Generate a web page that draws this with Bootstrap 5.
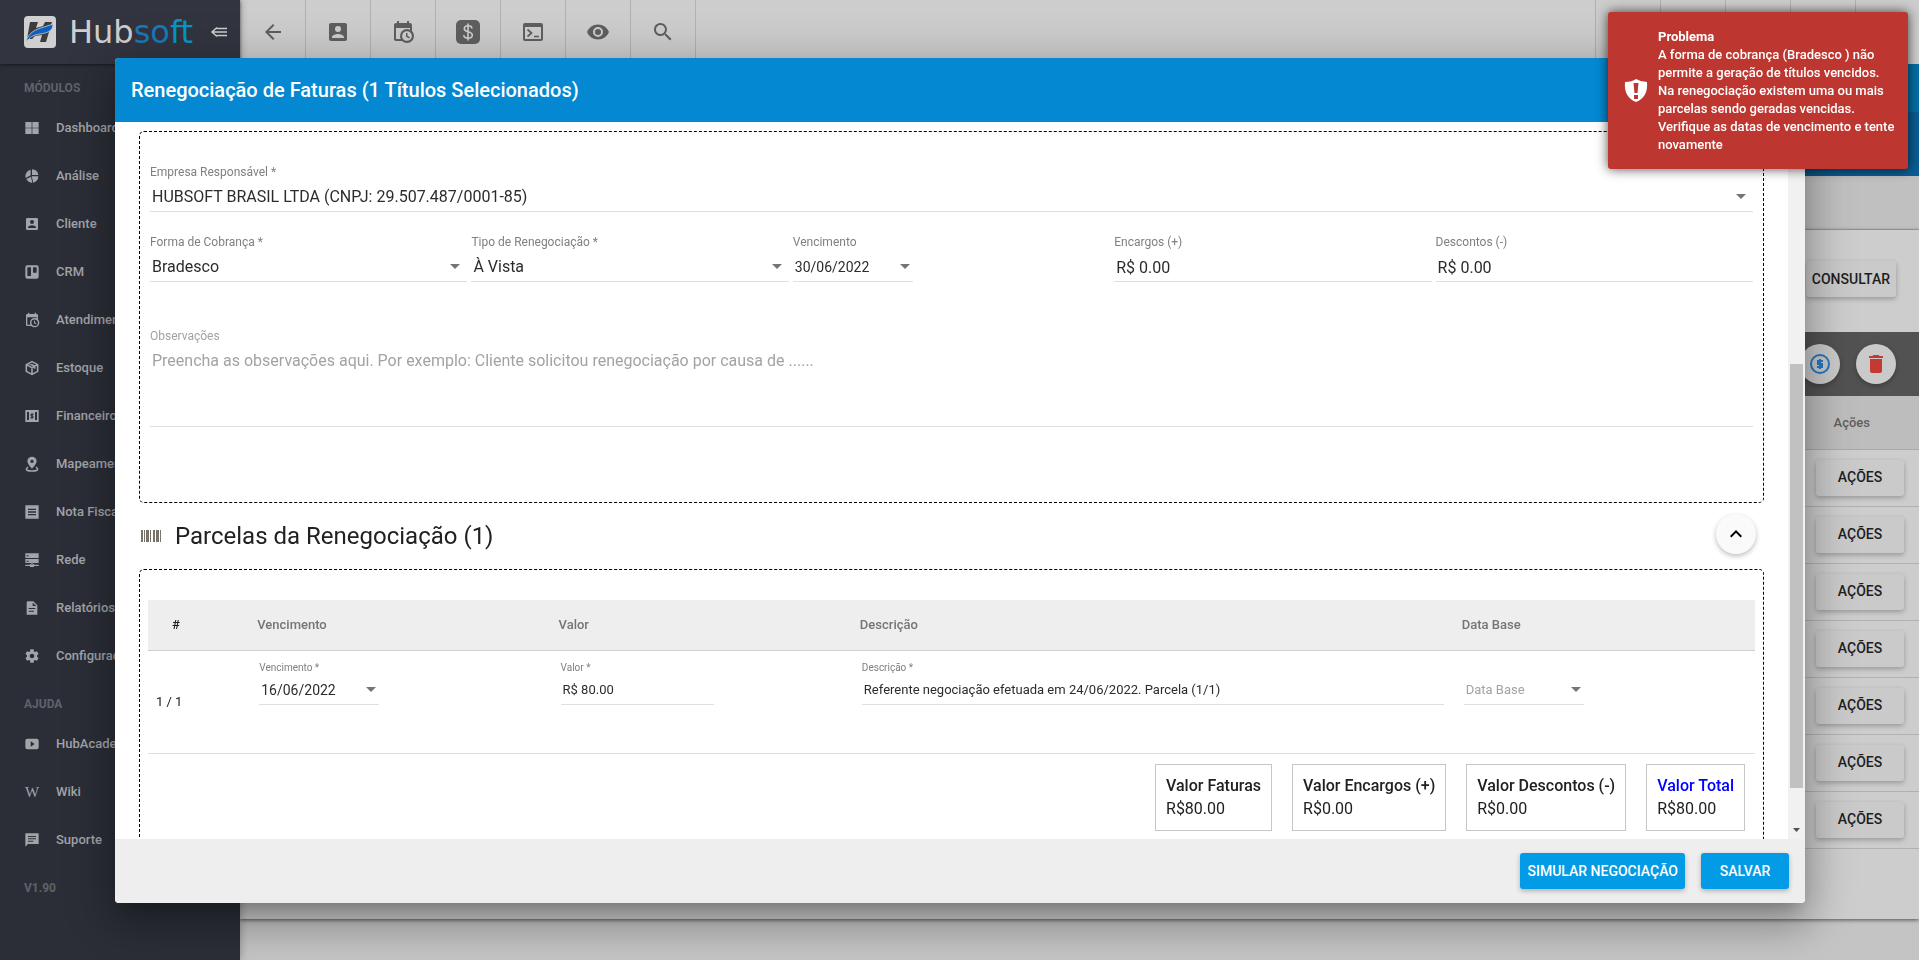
<!DOCTYPE html>
<html lang="pt-BR">
<head>
<meta charset="utf-8">
<meta name="viewport" content="width=device-width, initial-scale=1">
<title>Hubsoft - Renegociação de Faturas</title>
<link href="https://cdn.jsdelivr.net/npm/bootstrap@5.3.0/dist/css/bootstrap.min.css" rel="stylesheet">
<style>
body{font-family:Roboto,"Liberation Sans",sans-serif;font-size:14px;color:#212121;background:#c4c4c4;height:100vh;overflow:hidden}
svg{fill:currentColor;flex:none}
.line{fill:none}
/* sidebar */
.side{width:240px;background:#2b2e37;color:#a2a4a8;z-index:2;box-shadow:0 0 8px rgba(0,0,0,.3)}
.side-top{height:64px;padding:0 12px 0 24px;background:#32343f;box-shadow:0 1px 3px rgba(0,0,0,.5)}
.brand-name{font-family:"DejaVu Sans","Liberation Sans",sans-serif;font-weight:400;font-size:32px;line-height:32px;color:#cfcfcf;margin-left:13px}
.brand-name b{font-weight:400;color:#1a79b8}
.brand-name b+b{color:#0d93c8}
.side-title{height:40px;padding:15px 0 0 24px;font-size:12px;line-height:18px;font-weight:700;color:#5f6269}
.side .nav-link{height:48px;padding:0 24px;gap:16px;font-size:13px;font-weight:500;color:inherit;white-space:nowrap}
.wiki{width:16px;font-family:"Liberation Serif",serif;font-size:15px;line-height:16px;text-align:center}
/* page behind the dialog */
.tools{height:64px;background:#cdcdcd;color:#5f5f5f}
.tools button{width:65px;color:inherit;background:none;border:0;border-right:1px solid #b1b1b1}
.tools button:first-child{width:66px}
.tools .tools-end button{width:65px;border-right:0;border-left:1px solid #b1b1b1}
.tools .tools-end button:last-child{width:64px}
.hero-a{height:48px;background:#046ea3}
.hero-b{height:64px;background:#0a5c93}
.crumbs{height:54px;background:#c0c0c0;border-bottom:1px solid #a9a9a9}
.sheet{background:#cdcdcd;box-shadow:0 1px 4px rgba(0,0,0,.6);height:689px}
.filter{height:102px;padding-right:23px}
.btn-flat{min-width:88px;height:36px;padding:0 6px;border:0;border-radius:3px;background:#cacaca;color:#1e1e1e;font-size:14px;font-weight:500;box-shadow:0 2px 5px rgba(0,0,0,.26)}
.actions{height:64px;background:#525252;padding-right:23px;gap:16px}
.round{width:40px;height:40px;border:0;border-radius:50%;background:#cacaca;box-shadow:0 2px 5px rgba(0,0,0,.26)}
.list th{height:53px;padding:0 49px 0 0;text-align:right;background:#bdbdbd;color:#606060;font-size:13px;font-weight:500;border-bottom:1px solid #a9a9a9}
.list td{height:57px;padding:0 15px 0 0;text-align:right;border-bottom:1px solid #b1b1b1}
/* dialog */
.veil{position:fixed;inset:0;padding:58px 114px 57px 115px;z-index:10}
.dialog{border-radius:4px;overflow:hidden;background:#fff;box-shadow:0 11px 15px -7px rgba(0,0,0,.2),0 24px 38px 3px rgba(0,0,0,.14),0 9px 46px 8px rgba(0,0,0,.22)}
.dialog-head{height:64px;padding:0 16px;background:#0388d1;color:#fff;flex:none}
.dialog-head h2{font-size:20px;font-weight:500;margin:0}
.dialog-main{padding:9px 24px 0}
.dialog-foot{height:64px;padding:0 16px;gap:16px;background:#eee;flex:none}
.btn-go{min-width:88px;height:36px;padding:0 6px;border:0;border-radius:3px;background:#039be5;color:#fff;font-size:14px;font-weight:500;box-shadow:0 2px 5px rgba(0,0,0,.26)}
.btn-go:first-child{padding:0 7px}
.box{border:1px dashed #000;border-radius:5px;margin:0;min-width:0}
.box-a{padding:32px 10px 75px}
.box-b{padding:30px 8px}
.f label{display:block;font-size:12px;line-height:16px;margin-bottom:2px;color:#808080;font-weight:400}
.f input,.f select,.f textarea{display:block;width:100%;height:30px;padding:1px 2px 0;border:0;border-bottom:1px solid #dfdfdf;border-radius:0;background:transparent;color:#2c2c2c;font-size:16px;font-weight:400;outline:0;resize:none;appearance:none}
.f textarea{height:81px;padding-top:3px}
.f ::placeholder{color:#a3a3a3;opacity:1}
.f select,.f .pick{background:url("data:image/svg+xml,%3Csvg xmlns='http://www.w3.org/2000/svg' width='10' height='5'%3E%3Cpath d='M0 0h10L5 5z' fill='%23757575'/%3E%3C/svg%3E") no-repeat right 7px center}
.f .pick{width:120px;background-position:right 3px center;font-size:14px}
.row5{display:grid;grid-template-columns:repeat(5,1fr);gap:4px;margin-top:22px}
.obs{margin-top:46px}
.obs label{color:#a3a3a3}
.part{height:66px;padding:0 8px 0 2px}
.part h3{font-size:24px;font-weight:400;margin:0 0 0 13px}
.fab{width:40px;height:40px;border:0;border-radius:50%;background:#fafafa;box-shadow:0 2px 5px rgba(0,0,0,.26);padding:0}
.parc{table-layout:fixed}
.parc th{height:50px;background:#eee;border-bottom:1px solid #cfcfcf;color:#757575;font-size:13px;font-weight:500;padding:0 8px}
.parc th:first-child{padding-left:24px;color:#212121}
.parc td{height:103px;border-bottom:1px solid #dfdfdf;padding:10px 10px 0;vertical-align:top}
.parc td:first-child{padding:0 8px;vertical-align:middle;font-size:13px}
.parc .f label{font-size:10px;line-height:14px;margin:0}
.parc .f input{font-size:13px}
.parc .f .pick{font-size:14px}
.parc .f .val{width:153px}
.parc .f .bare{margin-top:14px;font-size:13px}
.sums{gap:20px;margin:10px 10px 0 0}
.sum{border:1px solid #c6c6c6;padding:9px 10px;font-size:16px;line-height:23px;height:67px}
.sum strong{display:block;font-weight:500}
.sum .tot{color:#00f}
.bar{width:17px;background:#f1f1f1;flex:none;padding:242px 2px 0}
.bar-thumb{height:424px;background:#c1c1c1}
/* message */
.msg{position:fixed;top:12px;right:11px;width:300px;padding:14px 16px;gap:10px;z-index:20;background:#bd362f;color:#fff;border-radius:3px;font-size:13px;line-height:18px;font-weight:500;box-shadow:0 0 12px rgba(0,0,0,.7);min-height:157px}
.msg strong{font-weight:700}
</style>
</head>
<body class="d-flex">
<svg class="d-none">
<symbol id="user" viewBox="0 0 24 24"><path d="M6,17C6,15 10,13.9 12,13.9C14,13.9 18,15 18,17V18H6M15,9A3,3 0 0,1 12,12A3,3 0 0,1 9,9A3,3 0 0,1 12,6A3,3 0 0,1 15,9M3,5V19A2,2 0 0,0 5,21H19A2,2 0 0,0 21,19V5A2,2 0 0,0 19,3H5C3.89,3 3,3.9 3,5Z"/></symbol>
<symbol id="cal" viewBox="0 0 24 24"><path d="M15,13H16.5V15.82L18.94,17.23L18.19,18.53L15,16.69V13M19,8H5V19H9.67C9.24,18.09 9,17.07 9,16A7,7 0 0,1 16,9C17.07,9 18.09,9.24 19,9.67V8M5,21C3.89,21 3,20.1 3,19V5C3,3.89 3.89,3 5,3H6V1H8V3H16V1H18V3H19A2,2 0 0,1 21,5V11.1C22.24,12.36 23,14.09 23,16A7,7 0 0,1 16,23C14.09,23 12.36,22.24 11.1,21H5M16,11.15A4.85,4.85 0 0,0 11.15,16C11.15,18.68 13.32,20.85 16,20.85A4.85,4.85 0 0,0 20.85,16C20.85,13.32 18.68,11.15 16,11.15Z"/></symbol>
</svg>

<aside class="side flex-shrink-0 h-100">
  <div class="side-top d-flex align-items-center">
    <svg width="32" height="32" viewBox="0 0 32 32"><rect width="32" height="32" rx="4" fill="#d0d0d0"/><path d="M6 6h8l-2 6 7-2 2-4h7l-6 20h-6l2-7-7 1-3 3H3z" fill="#3c3c3c"/><path d="M2 26C4 16 13 13 20 11l9-3c0 8-7 9-13 10C9 19 6 21 2 26z" fill="#0d5fc4" stroke="#d0d0d0" stroke-width=".8"/></svg>
    <span class="brand-name">Hub<b>so</b><b>ft</b></span>
    <svg class="line ms-auto" width="18" height="16" viewBox="0 0 18 16" stroke="#cfcfcf" stroke-width="1.500"><path d="M7 3.500 2 8l5 4.500M6.500 4.500H17M2 8h15M6.500 11.500H17"/></svg>
  </div>
  <nav class="nav flex-column flex-nowrap">
    <div class="side-title">MÓDULOS</div>
    <a class="nav-link d-flex align-items-center" href="#"><svg width="16" height="16" viewBox="0 0 24 24"><path d="M2 3h9.500v8.500H2zM12.500 3H22v8.500h-9.500zM2 12.500h9.500V21H2zM12.500 12.500H22V21h-9.500z"/></svg>Dashboard</a>
    <a class="nav-link d-flex align-items-center" href="#"><svg width="16" height="16" viewBox="0 0 24 24"><path d="M10 2.500V11L2.500 15A10 10 0 0 1 10 2.500zM12 2a10 10 0 0 1 9.500 8.500H12zM11.500 12.500h10A10 10 0 0 1 14 22zM10.500 13l2 9a10 10 0 0 1-9-5.500z"/></svg>Análise</a>
    <a class="nav-link d-flex align-items-center" href="#"><svg width="16" height="16"><use href="#user"/></svg>Cliente</a>
    <a class="nav-link d-flex align-items-center" href="#"><svg width="16" height="16" viewBox="0 0 24 24"><path fill-rule="evenodd" d="M4 2h16l2 2v16l-2 2H4l-2-2V4zM5 5v13h5.500V5zM13.500 5v8H19V5z"/></svg>CRM</a>
    <a class="nav-link d-flex align-items-center" href="#"><svg width="16" height="16"><use href="#cal"/></svg>Atendimento</a>
    <a class="nav-link d-flex align-items-center" href="#"><svg class="line" width="16" height="16" viewBox="0 0 24 24" stroke="currentColor" stroke-width="2.400"><path d="M12 2.500 20.500 7v10L12 21.500 3.500 17V7zM3.500 7 12 11.500 20.500 7M12 11.500v10M7.500 4.800l8.500 4.500V13"/></svg>Estoque</a>
    <a class="nav-link d-flex align-items-center" href="#"><svg width="16" height="16" viewBox="0 0 24 24"><path fill-rule="evenodd" d="M2 3h20v18H2zM4.500 6v12h15V6z"/><path d="M7.500 6h9v12h-9z"/><path class="line" d="M14.500 9.500H10.500V12h3v2.500h-4M12 7.500v9" stroke="#2b2e37" stroke-width="1.500"/></svg>Financeiro</a>
    <a class="nav-link d-flex align-items-center" href="#"><svg width="16" height="16" viewBox="0 0 24 24"><path fill-rule="evenodd" d="M12 1a7 7 0 0 1 7 7c0 4-7 11-7 11S5 12 5 8a7 7 0 0 1 7-7zm0 4.500a2.500 2.500 0 1 0 0 5 2.500 2.500 0 0 0 0-5z"/><path class="line" d="M6 16.500c-6 5 0 6 6 6s12-1 6-6" stroke="currentColor" stroke-width="2.200"/></svg>Mapeamento</a>
    <a class="nav-link d-flex align-items-center" href="#"><svg width="16" height="16" viewBox="0 0 24 24"><path fill-rule="evenodd" d="M2 2h20v20H2zM6 7v2h12V7zM6 11v2h12v-2zM6 15v2h12v-2z"/></svg>Nota Fiscal</a>
    <a class="nav-link d-flex align-items-center" href="#"><svg width="16" height="16" viewBox="0 0 24 24"><path fill-rule="evenodd" d="M2 2h20v7H2zM4 5v1.500h3V5zM2 10.500h20v6H2zM4 13v1.500h3V13zM11 16h2v3h-2zM2 19h7v-1h6v1h7v2h-7v1.500H9V21H2z"/></svg>Rede</a>
    <a class="nav-link d-flex align-items-center" href="#"><svg width="16" height="16" viewBox="0 0 24 24"><path fill-rule="evenodd" d="M5 2h9l6 6v14H4V3zM13 4v5h5.500zM7 12v1.500h10V12zM7 16v1.500h8V16z"/></svg>Relatórios</a>
    <a class="nav-link d-flex align-items-center" href="#"><svg width="16" height="16" viewBox="0 0 24 24"><path d="M12,15.500A3.500,3.500 0 0,1 8.500,12A3.500,3.500 0 0,1 12,8.500A3.500,3.500 0 0,1 15.500,12A3.500,3.500 0 0,1 12,15.500M19.430,12.970C19.470,12.650 19.500,12.330 19.500,12C19.500,11.670 19.470,11.340 19.430,11L21.540,9.370C21.730,9.220 21.780,8.950 21.660,8.730L19.660,5.270C19.540,5.050 19.270,4.960 19.050,5.050L16.560,6.050C16.040,5.660 15.500,5.320 14.870,5.070L14.500,2.420C14.460,2.180 14.250,2 14,2H10C9.750,2 9.540,2.180 9.500,2.420L9.130,5.070C8.500,5.320 7.960,5.660 7.440,6.050L4.950,5.050C4.730,4.960 4.460,5.050 4.340,5.270L2.340,8.730C2.210,8.950 2.270,9.220 2.460,9.370L4.570,11C4.530,11.340 4.500,11.670 4.500,12C4.500,12.330 4.530,12.650 4.570,12.970L2.460,14.630C2.270,14.780 2.210,15.050 2.340,15.270L4.340,18.730C4.460,18.950 4.730,19.030 4.950,18.950L7.440,17.940C7.960,18.340 8.500,18.680 9.130,18.930L9.500,21.580C9.540,21.820 9.750,22 10,22H14C14.250,22 14.460,21.820 14.500,21.580L14.870,18.930C15.500,18.670 16.040,18.340 16.560,17.940L19.050,18.950C19.270,19.030 19.540,18.950 19.660,18.730L21.660,15.270C21.780,15.050 21.730,14.780 21.540,14.630L19.430,12.970Z"/></svg>Configurações</a>
    <div class="side-title">AJUDA</div>
    <a class="nav-link d-flex align-items-center" href="#"><svg width="16" height="16" viewBox="0 0 24 24"><path fill-rule="evenodd" d="M5 4h14q3 0 3 3v10q0 3-3 3H5q-3 0-3-3V7q0-3 3-3zM10 8v8l6-4z"/></svg>HubAcademy</a>
    <a class="nav-link d-flex align-items-center" href="#"><span class="wiki">W</span>Wiki</a>
    <a class="nav-link d-flex align-items-center" href="#"><svg width="16" height="16" viewBox="0 0 24 24"><path fill-rule="evenodd" d="M2 2h20v16H6l-4 4zM6 6v1.500h12V6zM6 9.500V11h12V9.500zM6 13v1.500h8V13z"/></svg>Suporte</a>
    <div class="side-title">V1.90</div>
  </nav>
</aside>

<main class="flex-grow-1">
  <div class="tools d-flex align-items-stretch">
    <button aria-label="Voltar"><svg width="24" height="24" viewBox="0 0 24 24"><path d="M20 11H7.800l5.600-5.600L12 4l-8 8 8 8 1.400-1.400L7.800 13H20z"/></svg></button>
    <button aria-label="Cliente"><svg width="24" height="24"><use href="#user"/></svg></button>
    <button aria-label="Agenda"><svg width="24" height="24"><use href="#cal"/></svg></button>
    <button aria-label="Financeiro"><svg width="24" height="24" viewBox="0 0 24 24"><rect width="24" height="24" rx="5"/><path class="line" d="M16 8.500C15.500 4.500 8.300 5 8.300 8.700c0 4 8 2.300 8 6.300 0 4-8 4.300-8.600.2M12 3.500v17" stroke="#cdcdcd" stroke-width="1.600"/></svg></button>
    <button aria-label="Terminal"><svg width="24" height="24" viewBox="0 0 24 24"><path fill-rule="evenodd" d="M4 3h16q2 0 2 2v14q0 2-2 2H4q-2 0-2-2V5q0-2 2-2zM4 7v12h16V7z"/><path class="line" d="m6.500 9.500 4 3.500-4 3.500M13 16.500h5" stroke="currentColor" stroke-width="1.700"/></svg></button>
    <button aria-label="Visualizar"><svg width="24" height="24" viewBox="0 0 24 24"><path fill-rule="evenodd" d="M12 4.500C7 4.500 2.700 7.600 1 12c1.700 4.400 6 7.500 11 7.500s9.300-3.100 11-7.500c-1.700-4.400-6-7.500-11-7.500zM12 17a5 5 0 1 1 0-10 5 5 0 0 1 0 10zm0-8a3 3 0 1 0 0 6 3 3 0 0 0 0-6z"/></svg></button>
    <button aria-label="Pesquisar"><svg width="24" height="24" viewBox="0 0 24 24"><path d="M15.500 14h-.8l-.3-.3A6.500 6.500 0 1 0 13.700 14.400l.3.300v.8l5 5 1.500-1.500zm-6 0a4.500 4.500 0 1 1 0-9 4.500 4.500 0 0 1 0 9z"/></svg></button>
    <div class="tools-end ms-auto d-flex"><button aria-label="Opção 1"></button><button aria-label="Opção 2"></button><button aria-label="Opção 3"></button><button aria-label="Opção 4"></button><button aria-label="Opção 5"></button></div>
  </div>
  <div class="hero-a"></div><div class="hero-b"></div><div class="crumbs"></div>
  <section class="sheet">
    <div class="filter d-flex align-items-center justify-content-end pb-1"><button class="btn-flat">CONSULTAR</button></div>
    <div class="actions d-flex align-items-center justify-content-end">
      <button class="round" aria-label="Renegociar"><svg class="line" width="24" height="24" viewBox="0 0 24 24" stroke="#2478c4" stroke-width="2"><circle cx="12" cy="12" r="9"/><path d="M15 9h-5v3h4v3H9M12 7v10"/></svg></button>
      <button class="round" aria-label="Excluir"><svg width="24" height="24" viewBox="0 0 24 24"><path fill="#c43a31" d="M6 19a2 2 0 0 0 2 2h8a2 2 0 0 0 2-2V7H6zM19 4h-3.500l-1-1h-5l-1 1H5v2h14z"/></svg></button>
    </div>
    <table class="list w-100">
      <thead><tr><th>Ações</th></tr></thead>
      <tbody>
        <tr><td><button class="btn-flat">AÇÕES</button></td></tr>
        <tr><td><button class="btn-flat">AÇÕES</button></td></tr>
        <tr><td><button class="btn-flat">AÇÕES</button></td></tr>
        <tr><td><button class="btn-flat">AÇÕES</button></td></tr>
        <tr><td><button class="btn-flat">AÇÕES</button></td></tr>
        <tr><td><button class="btn-flat">AÇÕES</button></td></tr>
        <tr><td><button class="btn-flat">AÇÕES</button></td></tr>
      </tbody>
    </table>
  </section>
</main>

<div class="veil d-flex">
  <div class="dialog d-flex flex-column flex-grow-1" role="dialog" aria-labelledby="dlg">
    <div class="dialog-head d-flex align-items-center"><h2 id="dlg">Renegociação de Faturas (1 Títulos Selecionados)</h2></div>
    <div class="d-flex flex-grow-1 overflow-hidden">
      <div class="dialog-main flex-grow-1 overflow-hidden">
        <fieldset class="box box-a">
          <div class="f"><label for="emp">Empresa Responsável *</label><select id="emp"><option>HUBSOFT BRASIL LTDA (CNPJ: 29.507.487/0001-85)</option></select></div>
          <div class="row5">
            <div class="f"><label for="forma">Forma de Cobrança *</label><select id="forma"><option>Bradesco</option></select></div>
            <div class="f"><label for="tipo">Tipo de Renegociação *</label><select id="tipo"><option>À Vista</option></select></div>
            <div class="f"><label for="venc">Vencimento</label><input id="venc" class="pick" value="30/06/2022"></div>
            <div class="f"><label for="enc">Encargos (+)</label><input id="enc" value="R$ 0.00"></div>
            <div class="f"><label for="desc">Descontos (-)</label><input id="desc" value="R$ 0.00"></div>
          </div>
          <div class="f obs"><label for="obs">Observações</label><textarea id="obs" placeholder="Preencha as observações aqui. Por exemplo: Cliente solicitou renegociação por causa de ......"></textarea></div>
        </fieldset>
        <div class="part d-flex align-items-center">
          <svg width="21" height="12" viewBox="0 0 21 12"><path fill="#77736a" d="M0 0h2v12H0zM3 0h1v12H3zM5 0h3v12H5zM9 0h1v12H9zM12 0h2v12h-2zM15 0h3v12h-3zM19 0h1v12h-1z"/></svg>
          <h3>Parcelas da Renegociação (1)</h3>
          <button class="fab ms-auto mb-1" aria-label="Recolher"><svg width="24" height="24" viewBox="0 0 24 24"><path d="M7.400 15.400 12 10.800l4.600 4.600L18 14l-6-6-6 6z"/></svg></button>
        </div>
        <fieldset class="box box-b">
          <table class="parc w-100">
            <colgroup><col style="width:6.300%"><col style="width:18.750%"><col style="width:18.750%"><col style="width:37.450%"><col></colgroup>
            <thead><tr><th>#</th><th>Vencimento</th><th>Valor</th><th>Descrição</th><th>Data Base</th></tr></thead>
            <tbody><tr>
              <td>1 / 1</td>
              <td><div class="f"><label for="pv">Vencimento *</label><input id="pv" class="pick" value="16/06/2022"></div></td>
              <td><div class="f"><label for="pval">Valor *</label><input id="pval" class="val" value="R$ 80.00"></div></td>
              <td><div class="f"><label for="pd">Descrição *</label><input id="pd" value="Referente negociação efetuada em 24/06/2022. Parcela (1/1)"></div></td>
              <td><div class="f"><input class="pick bare" aria-label="Data Base" placeholder="Data Base"></div></td>
            </tr></tbody>
          </table>
          <div class="sums d-flex justify-content-end">
            <div class="sum"><strong>Valor Faturas</strong>R$80.00</div>
            <div class="sum"><strong>Valor Encargos (+)</strong>R$0.00</div>
            <div class="sum"><strong>Valor Descontos (-)</strong>R$0.00</div>
            <div class="sum"><strong class="tot">Valor Total</strong>R$80.00</div>
          </div>
        </fieldset>
      </div>
      <div class="bar d-flex flex-column align-items-center" aria-hidden="true"><div class="bar-thumb w-100"></div><svg class="mt-auto mb-1" width="7" height="7" viewBox="0 0 7 7"><path d="M0 0h7L3.500 4z" fill="#505050"/></svg></div>
    </div>
    <div class="dialog-foot d-flex align-items-center justify-content-end"><button class="btn-go">SIMULAR NEGOCIAÇÃO</button><button class="btn-go">SALVAR</button></div>
  </div>
</div>

<div class="msg d-flex align-items-center" role="alert">
  <svg width="24" height="26" viewBox="0 0 24 26"><path fill-rule="evenodd" d="M1 4q7 0 11-3 5 3 11 3c1 10-3 17-11 20C4 21 0 14 1 4zM9.500 5l1 10h3l1-10zM10 17v4h4v-4z"/></svg>
  <div class="text-nowrap"><strong>Problema</strong><br>A forma de cobrança (Bradesco ) não<br>permite a geração de títulos vencidos.<br>Na renegociação existem uma ou mais<br>parcelas sendo geradas vencidas.<br>Verifique as datas de vencimento e tente<br>novamente</div>
</div>
<script src="https://cdn.jsdelivr.net/npm/bootstrap@5.3.0/dist/js/bootstrap.bundle.min.js"></script>
</body>
</html>
